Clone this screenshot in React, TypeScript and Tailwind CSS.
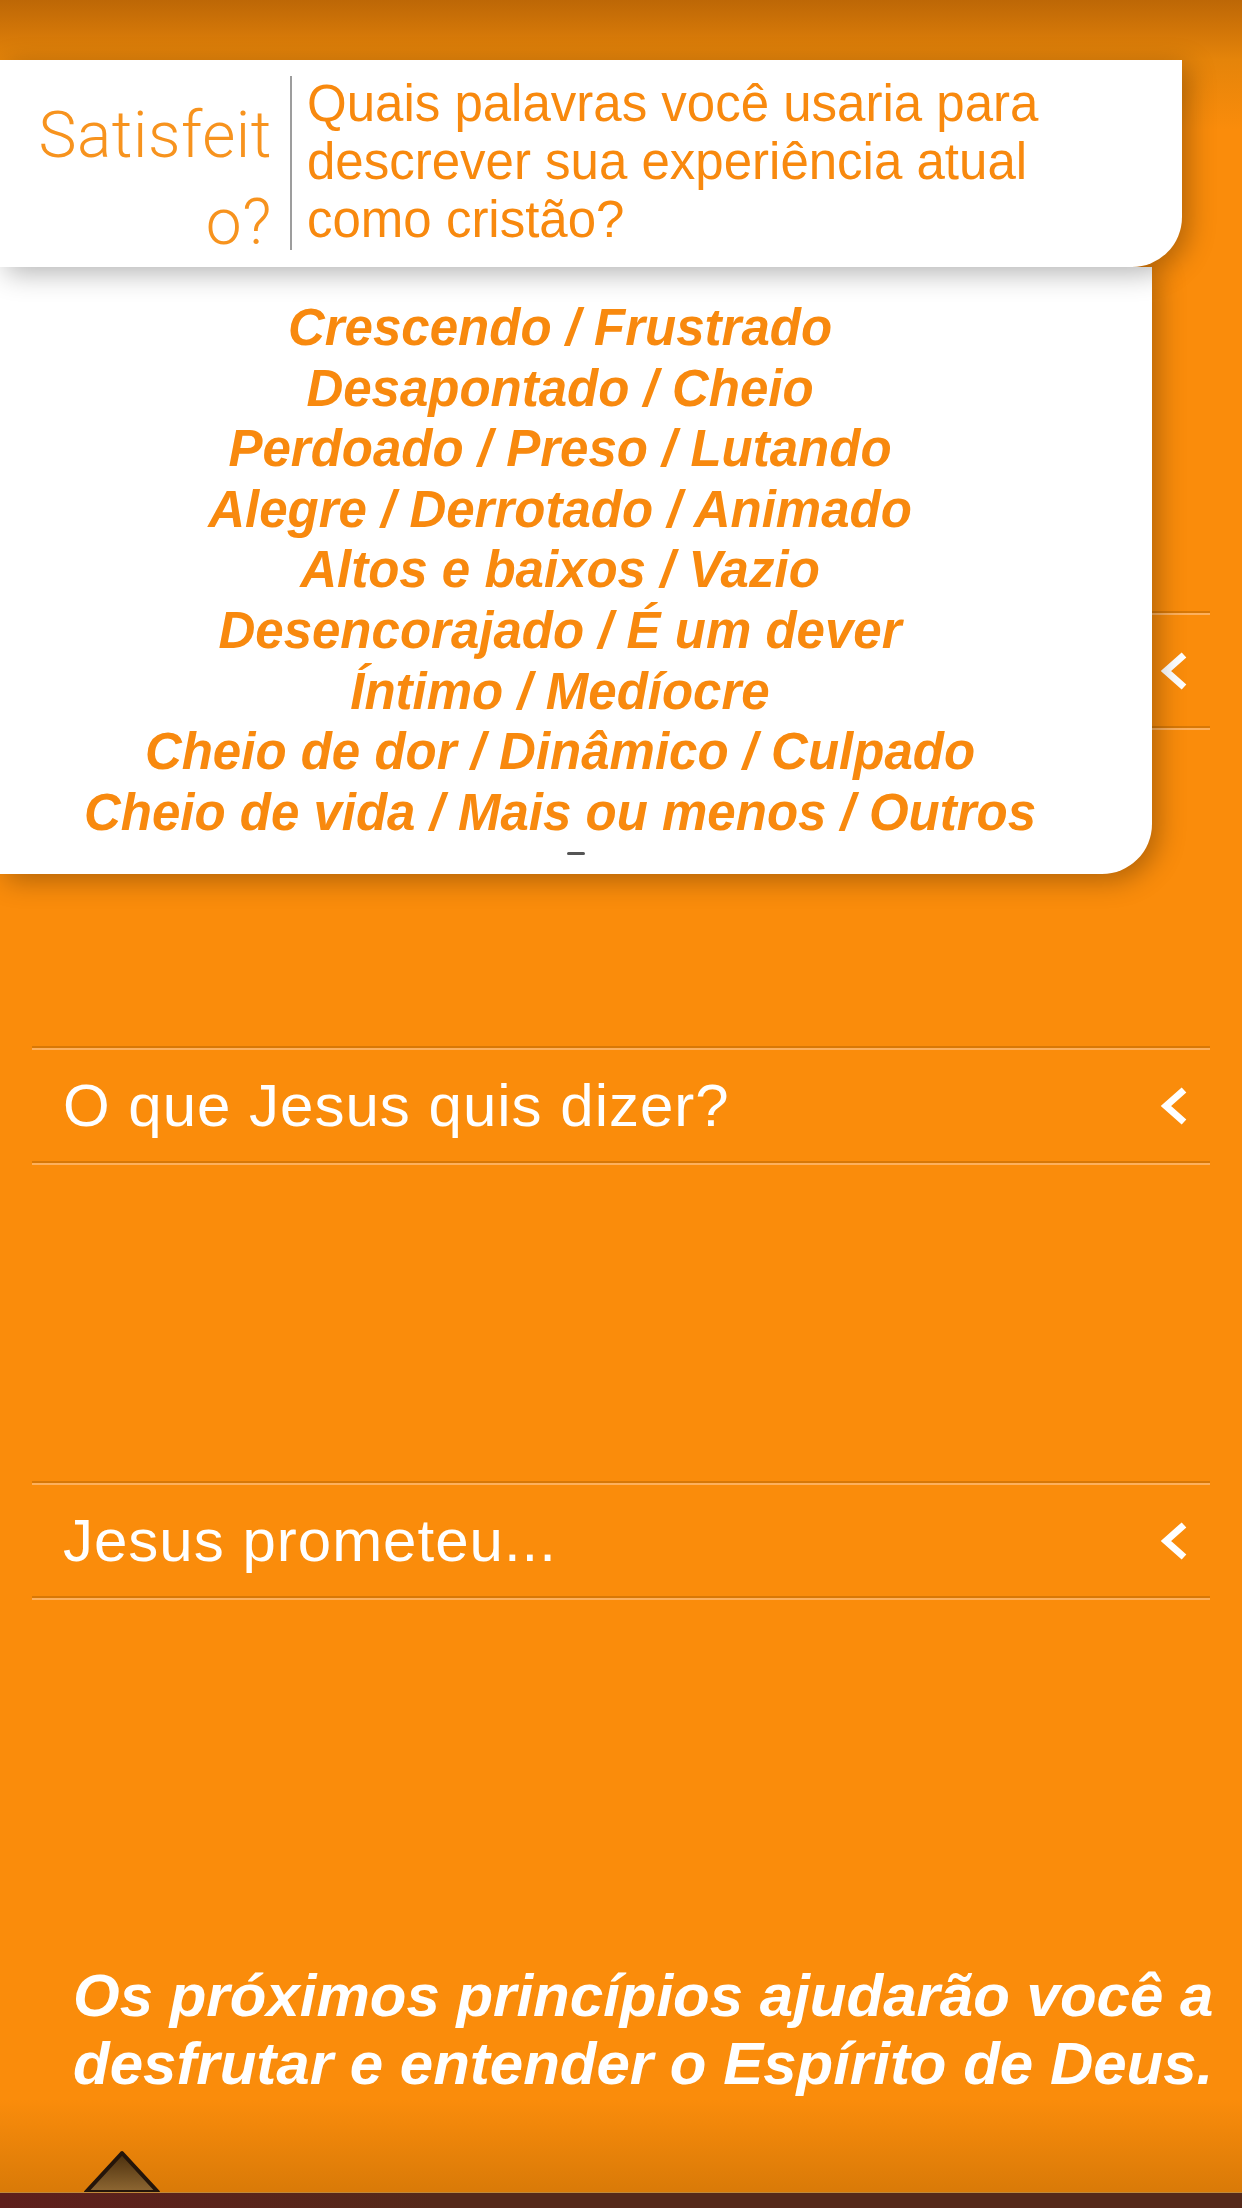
const words = [
  "Crescendo / Frustrado",
  "Desapontado / Cheio",
  "Perdoado / Preso / Lutando",
  "Alegre / Derrotado / Animado",
  "Altos e baixos / Vazio",
  "Desencorajado / É um dever",
  "Íntimo / Medíocre",
  "Cheio de dor / Dinâmico / Culpado",
  "Cheio de vida / Mais ou menos / Outros",
];

function Chevron() {
  return (
    <svg width="28" height="40" viewBox="0 0 28 40" className="shrink-0">
      <polyline points="24,4 6,20 24,36" fill="none" stroke="white" strokeWidth="7" strokeLinejoin="miter" />
    </svg>
  );
}

function Groove() {
  return <div className="h-[4px] border-t-2 border-b-2 border-t-[#d87806] border-b-[#fdb05c]" />;
}

function Row({ title }: { title?: string }) {
  return (
    <div className="ml-[32px] w-[1178px]">
      <Groove />
      <div className="flex h-[111px] items-center justify-between pl-[31px] pr-[22px]">
        <span className="text-[60px] tracking-[1px] text-white">{title}</span>
        <Chevron />
      </div>
      <Groove />
    </div>
  );
}

export default function App() {
  return (
    <div className="relative flex h-[2208px] w-[1242px] flex-col overflow-hidden bg-[linear-gradient(to_bottom,#bd6706_0px,#e5840a_60px,#fa8c0b_130px,#fa8c0b_2100px,#d97a08_2192px)] font-['Liberation_Sans',Arial,sans-serif]">
      {/* list rows behind the popover */}
      <div className="pt-[611px]">
        <Row />
      </div>
      <div className="mt-[316px]">
        <Row title="O que Jesus quis dizer?" />
      </div>
      <div className="mt-[316px]">
        <Row title="Jesus prometeu..." />
      </div>

      <div className="mt-[362px] whitespace-nowrap pl-[73px] text-[60px] font-bold italic leading-[68px] text-white">
        <div>Os próximos princípios ajudarão você a</div>
        <div>desfrutar e entender o Espírito de Deus.</div>
      </div>

      {/* bottom bar */}
      <div className="mt-auto">
        <div className="flex h-[44px] items-end pl-[83px]">
          <svg width="78" height="43" viewBox="0 0 78 43">
            <defs>
              <linearGradient id="tri" x1="0" y1="0" x2="0" y2="1">
                <stop offset="0" stopColor="#4a2e0c" />
                <stop offset="1" stopColor="#8f6833" />
              </linearGradient>
            </defs>
            <polygon points="39,4 3,43 75,43" fill="url(#tri)" stroke="#24150a" strokeWidth="4" strokeLinejoin="round" />
          </svg>
        </div>
        <div className="h-[16px] border-t border-[#c08a3a] bg-[linear-gradient(to_right,#5e1f1c,#55291a_35%,#55291a)]" />
      </div>

      {/* popover: question header */}
      <div className="absolute left-0 top-[60px] z-20 flex h-[207px] w-[1182px] rounded-br-[50px] bg-white shadow-[6px_6px_28px_rgba(0,0,0,0.3)]">
        <div className="w-[290px] pr-[18px] pt-[32px] text-right font-['Roboto',sans-serif] text-[64px] font-light leading-[87px] tracking-[0.6px] text-[#f7931e]">
          Satisfeit
          <br />
          o?
        </div>
        <div className="mt-[16px] h-[174px] w-[2px] bg-[#9d9d9d]" />
        <div className="whitespace-nowrap pl-[15px] pt-[15px] text-[51px] leading-[58px] text-[#f8890e]">
          <div>Quais palavras você usaria para</div>
          <div>descrever sua experiência atual</div>
          <div>como cristão?</div>
        </div>
      </div>

      {/* popover: answers */}
      <div className="absolute left-0 top-[267px] z-10 flex h-[607px] w-[1152px] flex-col rounded-br-[50px] bg-white shadow-[6px_6px_28px_rgba(0,0,0,0.3)]">
        <div className="whitespace-nowrap pr-[32px] pt-[31px] text-center text-[51px] font-bold italic leading-[60.6px] text-[#f8890e]">
          {words.map((w) => (
            <div key={w}>{w}</div>
          ))}
        </div>
        <div className="mx-auto mt-[9px] h-[3px] w-[18px] rounded-sm bg-[#555555]" />
      </div>
    </div>
  );
}
